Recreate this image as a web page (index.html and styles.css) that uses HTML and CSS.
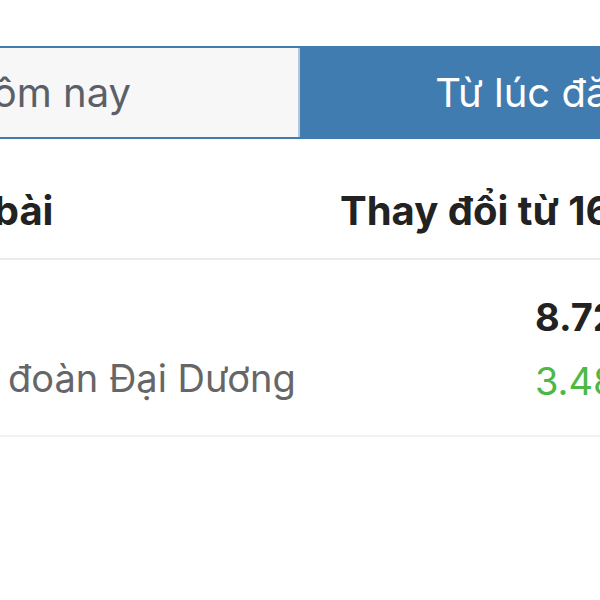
FILE: index.html
```html
<!DOCTYPE html>
<html lang="vi">
<head>
    <meta charset="UTF-8">
    <meta name="viewport" content="width=device-width, initial-scale=1.0">
    <title>Hiệu suất bài viết</title>
    <link rel="stylesheet" href="styles.css">
</head>
<body>
    <div class="page">
        <div class="tabs">
            <div class="tab tab-today">Hôm nay</div>
            <div class="tab tab-since active">Từ lúc đăng bài</div>
        </div>
        <div class="table">
            <div class="row head">
                <div class="cell name-col">Tên bài</div>
                <div class="cell value-col">Thay đổi từ 16/03</div>
            </div>
            <div class="row item">
                <div class="cell name-col">
                    <span class="company">Tập đoàn Đại Dương</span>
                </div>
                <div class="cell value-col">
                    <div class="price">8.720</div>
                    <div class="change up">3.480</div>
                </div>
            </div>
        </div>
    </div>
</body>
</html>
```

FILE: styles.css
```css
html, body {
    margin: 0;
    padding: 0;
    background: #fff;
    font-family: Inter, "Noto Sans", sans-serif;
    overflow: hidden;
}
.page {
    padding-top: 46px;
}
.tabs {
    display: flex;
    width: 1064px;
    margin-left: -204px;
    border-top: 2px solid #407cb0;
    border-bottom: 2px solid #407cb0;
}
.tab {
    height: 89px;
    display: flex;
    align-items: center;
    justify-content: center;
    font-size: 40px;
}
.tab-today {
    width: 502px;
    background-color: #f7f7f7;
    color: #5b6068;
    border-right: 2px solid #b3c7da;
}
.tab-since {
    flex: 1;
    background-color: #407cb0;
    color: #fff;
}
.table {
    margin-left: -84px;
    width: 1000px;
}
.row {
    display: grid;
    grid-template-columns: 424px 1fr;
    border-bottom: 2px solid #ebebeb;
}
.row.item {
    border-bottom-color: #f2f2f2;
}
.head {
    height: 95px;
    padding-top: 24px;
    align-items: center;
    font-size: 40px;
    font-weight: 700;
    color: #222;
}
.head .name-col {
    margin-left: -4px;
}
.item {
    height: 175px;
}
.name-col {
    display: flex;
    align-items: flex-end;
}
.company {
    font-size: 38px;
    color: #666;
    padding-bottom: 34px;
    padding-left: 15px;
}
.item .value-col {
    padding-left: 195px;
    padding-top: 34px;
}
.price {
    font-size: 38px;
    font-weight: 700;
    color: #222;
    line-height: 46px;
}
.change {
    font-size: 38px;
    line-height: 46px;
    margin-top: 18px;
}
.change.up {
    color: #4cb944;
}
```
